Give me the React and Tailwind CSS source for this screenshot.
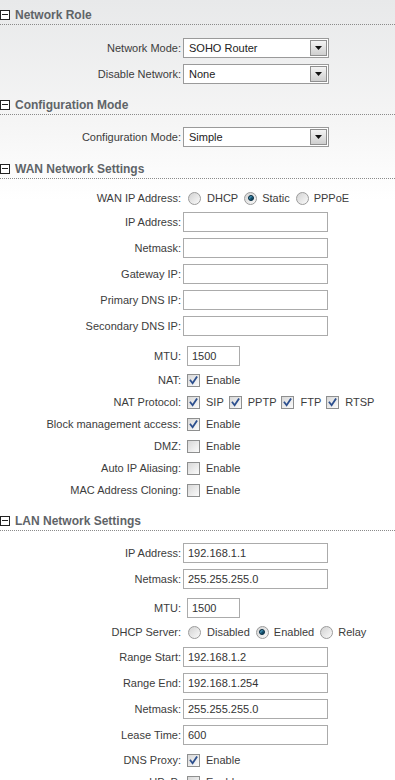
import React from "react";

const font = { fontFamily: '"Liberation Sans", Arial, sans-serif' };

function Header({ title, className = "" }) {
  return (
    <div className={"flex items-center h-[18px] border-b border-dotted border-[#8a8a8a] " + className}>
      <div className="w-[10px] h-[10px] border border-[#222] bg-white flex items-center justify-center mt-[-2px]">
        <div className="w-[6px] h-[1px] bg-[#222]" />
      </div>
      <div className="ml-[5px] text-[12px] font-bold text-[#5f6468] leading-[16px] mt-[-2px]">{title}</div>
    </div>
  );
}

function Row({ label, children, h = "h-[26px]", className = "" }) {
  return (
    <div className={"flex items-center " + h + " " + className}>
      <div className="w-[181px] shrink-0 text-right text-[11px] text-[#3c3c3c] whitespace-nowrap">{label}:</div>
      <div className="ml-[2px] flex items-center text-[11px] text-[#3c3c3c]">{children}</div>
    </div>
  );
}

function TextBox({ value = "", w = "w-[145px]", className = "" }) {
  return (
    <div className={"h-[20px] border border-[#ababab] bg-white pl-[4px] flex items-center text-[11px] text-[#333] " + w + " " + className}>
      {value}
    </div>
  );
}

function Select({ value }) {
  return (
    <div className="w-[146px] h-[20px] border border-[#9a9a9a] bg-white flex items-center justify-between">
      <span className="pl-[5px] text-[11px] text-[#222]">{value}</span>
      <div className="w-[17px] h-[16px] mr-[1px] border border-[#8f8f8f] bg-gradient-to-b from-[#f4f4f4] to-[#cfcfcf] flex items-center justify-center">
        <svg width="7" height="4" viewBox="0 0 7 4"><path d="M0 0h7L3.5 4z" fill="#111" /></svg>
      </div>
    </div>
  );
}

function Check({ checked }) {
  return (
    <div className="w-[13px] h-[13px] border border-[#8e8f8f] bg-gradient-to-br from-[#d8d8d8] to-[#fbfbfb] flex items-center justify-center ml-[4px] shrink-0">
      {checked && (
        <svg width="9" height="9" viewBox="0 0 9 9">
          <path d="M1.5 4.5 L3.6 7.2 L7.6 1.2" stroke="#2c4f8e" strokeWidth="1.8" fill="none" strokeLinecap="square" />
        </svg>
      )}
    </div>
  );
}

function Radio({ checked }) {
  return (
    <div className="w-[13px] h-[13px] rounded-full border border-[#9b9b9b] bg-gradient-to-br from-[#d2d2d2] to-[#fbfbfb] flex items-center justify-center ml-[5px] shrink-0">
      {checked && <div className="w-[6px] h-[6px] rounded-full bg-[#0e4763] border border-[#0a2f44] shadow-[inset_1px_1px_1px_#4fa3c7]" />}
    </div>
  );
}

function CheckLabel({ checked, text, first }) {
  return (
    <>
      <div className={first ? "" : "ml-[1px]"}><Check checked={checked} /></div>
      <span className="ml-[6px]">{text}</span>
    </>
  );
}

function RadioLabel({ checked, text, first }) {
  return (
    <>
      <div className={first ? "" : "ml-[1px]"}><Radio checked={checked} /></div>
      <span className={first ? "ml-[6px]" : "ml-[5px]"}>{text}</span>
    </>
  );
}

export default function App() {
  return (
    <div style={font} className="w-[395px] h-[780px] overflow-hidden bg-gradient-to-b from-[#e8e9ea] via-[#f5f5f5] via-[120px] to-white to-[200px]">
      <div className="pt-[7px]">
        <Header title="Network Role" />
        <div className="mt-[10px]">
          <Row label="Network Mode"><Select value="SOHO Router" /></Row>
          <Row label="Disable Network"><Select value="None" /></Row>
        </div>

        <Header title="Configuration Mode" className="mt-[10px]" />
        <div className="mt-[9px]">
          <Row label="Configuration Mode"><Select value="Simple" /></Row>
        </div>

        <Header title="WAN Network Settings" className="mt-[11px]" />
        <div className="mt-[8px]">
          <Row label="WAN IP Address" h="h-[22px]">
            <RadioLabel first text="DHCP" />
            <RadioLabel checked text="Static" />
            <RadioLabel text="PPPoE" />
          </Row>
          <Row label="IP Address"><TextBox /></Row>
          <Row label="Netmask"><TextBox /></Row>
          <Row label="Gateway IP"><TextBox /></Row>
          <Row label="Primary DNS IP"><TextBox /></Row>
          <Row label="Secondary DNS IP"><TextBox /></Row>
          <Row label="MTU" className="mt-[4px]"><TextBox value="1500" w="w-[53px]" className="ml-[4px]" /></Row>
          <Row label="NAT" h="h-[22px]"><CheckLabel first checked text="Enable" /></Row>
          <Row label="NAT Protocol" h="h-[22px]">
            <CheckLabel first checked text="SIP" />
            <CheckLabel checked text="PPTP" />
            <CheckLabel checked text="FTP" />
            <CheckLabel checked text="RTSP" />
          </Row>
          <Row label="Block management access" h="h-[22px]"><CheckLabel first checked text="Enable" /></Row>
          <Row label="DMZ" h="h-[22px]"><CheckLabel first text="Enable" /></Row>
          <Row label="Auto IP Aliasing" h="h-[22px]"><CheckLabel first text="Enable" /></Row>
          <Row label="MAC Address Cloning" h="h-[22px]"><CheckLabel first text="Enable" /></Row>
        </div>

        <Header title="LAN Network Settings" className="mt-[12px]" />
        <div className="mt-[9px]">
          <Row label="IP Address"><TextBox value="192.168.1.1" /></Row>
          <Row label="Netmask"><TextBox value="255.255.255.0" /></Row>
          <Row label="MTU" className="mt-[3px]"><TextBox value="1500" w="w-[53px]" className="ml-[4px]" /></Row>
          <Row label="DHCP Server" h="h-[22px]">
            <RadioLabel first text="Disabled" />
            <RadioLabel checked text="Enabled" />
            <RadioLabel text="Relay" />
          </Row>
          <Row label="Range Start" className="mt-[1px]"><TextBox value="192.168.1.2" /></Row>
          <Row label="Range End"><TextBox value="192.168.1.254" /></Row>
          <Row label="Netmask"><TextBox value="255.255.255.0" /></Row>
          <Row label="Lease Time"><TextBox value="600" /></Row>
          <Row label="DNS Proxy" h="h-[22px]" className="mt-[1px]"><CheckLabel first checked text="Enable" /></Row>
          <Row label="UPnP" h="h-[22px]"><CheckLabel first text="Enable" /></Row>
        </div>
      </div>
    </div>
  );
}
